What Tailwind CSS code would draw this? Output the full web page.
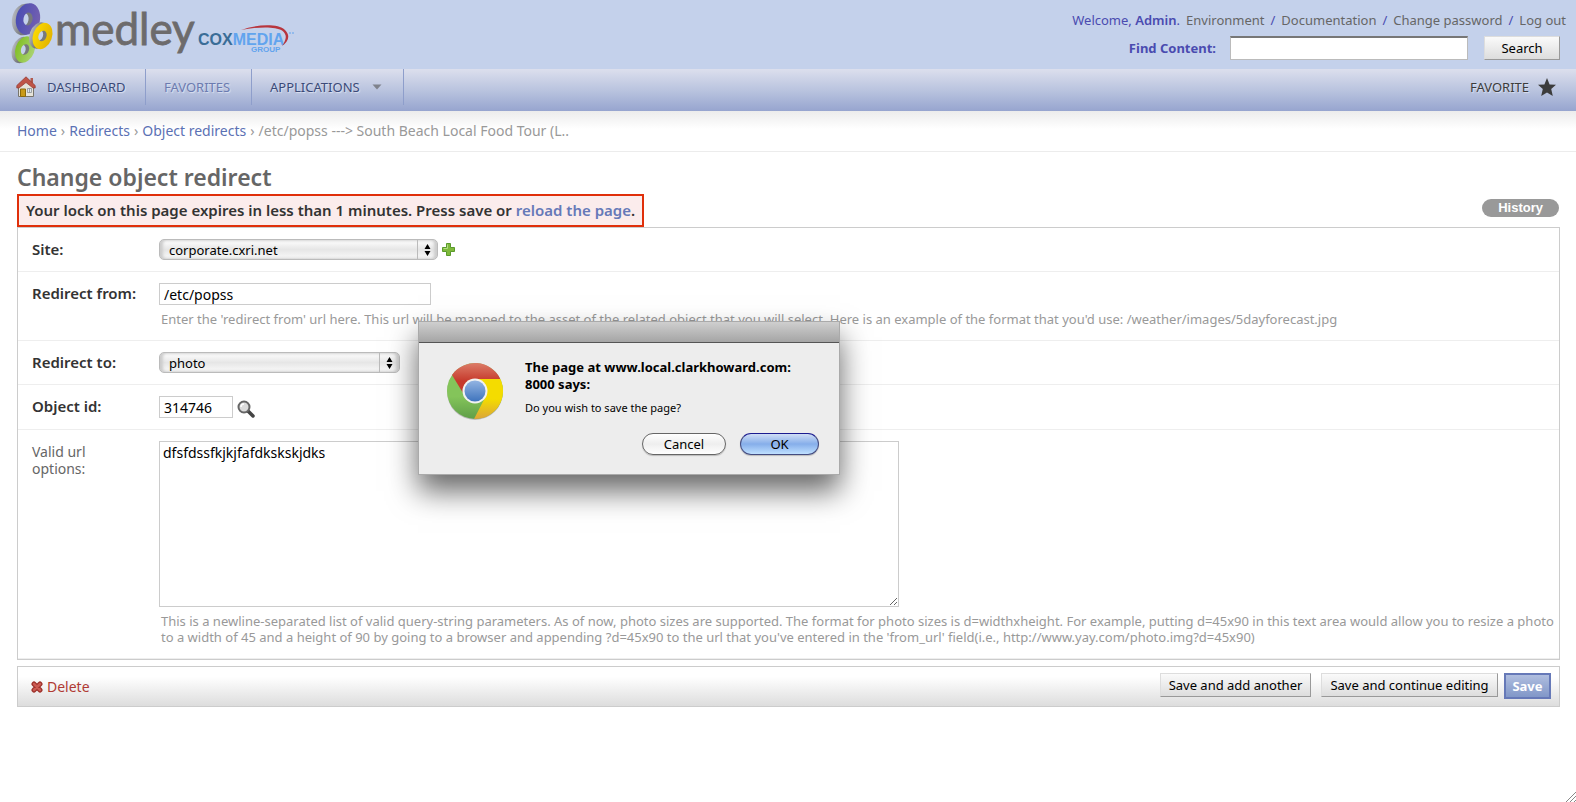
<!DOCTYPE html>
<html lang="en">
<head>
<meta charset="utf-8">
<title>Change object redirect</title>
<script src="https://cdn.jsdelivr.net/npm/@tailwindcss/browser@4"></script>
</head>
<body class="relative min-h-screen bg-white font-['Noto_Sans','Open_Sans',sans-serif] text-[13px] leading-4 text-[#333]">

<header class="flex h-[69px] items-start justify-between bg-[#c4d1eb] pr-[10px]">
  <a href="#" aria-label="Medley, Cox Media Group" class="block">
    <svg width="300" height="69" viewBox="0 0 300 69">
      <defs>
        <linearGradient id="gp" x1="0" x2="1"><stop offset="0" stop-color="#4a4db4"/><stop offset="1" stop-color="#7460b0"/></linearGradient>
        <linearGradient id="gy" x1="0" x2="1"><stop offset="0" stop-color="#fbd900"/><stop offset="1" stop-color="#e3b400"/></linearGradient>
        <linearGradient id="gg" x1="0" x2="1"><stop offset="0" stop-color="#82c025"/><stop offset="1" stop-color="#a9d272"/></linearGradient>
        <linearGradient id="gs" x1="0" x2="1"><stop offset="0" stop-color="#b5b8be"/><stop offset=".5" stop-color="#77797c"/></linearGradient>
        <path id="ringL" fill-rule="evenodd" d="M-12 0A12 16 0 1 1 12 0A12 16 0 1 1 -12 0ZM-4.500 0A4.500 6.500 0 1 0 4.500 0A4.500 6.500 0 1 0 -4.500 0Z"/>
        <path id="ringS" fill-rule="evenodd" d="M-9.500 0A9.500 13.500 0 1 1 9.500 0A9.500 13.500 0 1 1 -9.500 0ZM-4 0A4 5.500 0 1 0 4 0A4 5.500 0 1 0 -4 0Z"/>
      </defs>
      <use href="#ringL" transform="translate(24 19.500) rotate(12)" fill="url(#gs)"/>
      <use href="#ringL" transform="translate(28 19) rotate(12)" fill="url(#gp)"/>
      <use href="#ringS" transform="translate(21.500 50) rotate(20)" fill="url(#gs)"/>
      <use href="#ringS" transform="translate(25 49.500) rotate(20)" fill="url(#gg)"/>
      <use href="#ringS" transform="translate(39 35.500) rotate(20)" fill="url(#gs)"/>
      <use href="#ringS" transform="translate(42.500 36) rotate(20)" fill="url(#gy)"/>
      <text x="55" y="45" font-family="Lato, sans-serif" font-size="44" fill="#6d6b6c" stroke="#6d6b6c" stroke-width=".8">medley</text>
      <text x="198" y="45" font-family="Liberation Sans, sans-serif" font-weight="700" font-size="16" fill="#3a6d97">COX<tspan fill="#61a4ee">MEDIA</tspan></text>
      <text x="251" y="52" font-family="Liberation Sans, sans-serif" font-weight="700" font-size="8" fill="#61a4ee">GROUP</text>
      <path d="M241 30C255 24.500 278 23 285 30C291 36 288 42 282 46C286 40 288 35 282 30.500C275 26 256 27 241 30Z" fill="#b8353d"/>
      <path d="M289 33h2M292 33h2" stroke="#61a4ee" stroke-width="1"/>
    </svg>
  </a>
  <div class="flex flex-col items-end pt-3">
    <nav class="flex gap-[6px] text-[#4a4bb0]">
      <span>Welcome, <b class="font-semibold">Admin</b>.</span>
      <a href="#" class="text-[#666]">Environment</a><span>/</span>
      <a href="#" class="text-[#666]">Documentation</a><span>/</span>
      <a href="#" class="text-[#666]">Change password</a><span>/</span>
      <a href="#" class="text-[#666]">Log out</a>
    </nav>
    <form class="mt-2 flex items-center pr-[6px]">
      <label for="q" class="mr-[14px] font-bold text-[#4a4bb0]">Find Content:</label>
      <input id="q" type="text" class="h-6 w-[238px] border border-[#bbb] border-t-2 border-t-[#777] bg-white px-1 outline-none">
      <button type="button" class="ml-4 h-6 w-[76px] border border-[#ddd] border-r-[#999] border-b-[#999] bg-linear-to-b from-[#fafafa] to-[#ddd] text-black">Search</button>
    </form>
  </div>
</header>

<nav class="flex h-[42px] bg-linear-to-b from-[#dcdfed] via-[#bac4df] to-[#97a5cf] text-[#3a4a78] [text-shadow:1px_1px_1px_#dde2f0]">
  <a href="#" class="flex h-9 w-[146px] items-center border-r border-[#8e9ecb] pl-4">
    <svg width="20" height="22" viewBox="0 0 20 22" class="mr-[11px]">
      <path d="M2.500 10L10 4L17.500 10V20.500H2.500Z" fill="#e6e4da" stroke="#77756c"/>
      <path d="M14.500 2h2.500V7h-2.500Z" fill="#b15a4e"/>
      <path d="M10 .8L0.800 9.500V12H3L10 6.500L17 12H19.200V9.500Z" fill="#bf5447" stroke="#8f3a30" stroke-width=".7"/>
      <path d="M4.500 13h5V20.500h-5Z" fill="#c99a18" stroke="#8b6a0e"/>
      <path d="M11.500 12.500h4v4h-4ZM13.500 12.500v4" fill="#dfe7ee" stroke="#8a9096" stroke-width=".8"/>
    </svg>DASHBOARD</a>
  <a href="#" class="flex h-9 w-[106px] items-center border-r border-[#8e9ecb] pl-[18px] text-[#6b7bb0]">FAVORITES</a>
  <a href="#" class="flex h-9 w-[152px] items-center border-r border-[#8e9ecb] pl-[18px]">APPLICATIONS
    <svg width="10" height="6" viewBox="0 0 10 6" class="ml-3"><path d="M0.500 .5h9L5 5.500Z" fill="#7f828c"/></svg></a>
  <a href="#" class="ml-auto flex h-9 items-center gap-2 pr-[19px] text-[#3c3c3c]">FAVORITE
    <svg width="20" height="20" viewBox="0 0 20 20"><path d="M10 1L12.600 7.400L19 7.800L14.200 12L15.800 19L10 15.600L4.200 19L5.800 12L1 7.800L7.400 7.400Z" fill="#3c3c3c"/></svg></a>
</nav>

<nav class="flex h-[41px] items-center gap-1 border-b border-[#ececec] bg-linear-to-b from-[#ececec] to-white to-45% px-[17px] text-[14px] text-[#999]">
  <a href="#" class="text-[#5b71b4]">Home</a>›<a href="#" class="text-[#5b71b4]">Redirects</a>›<a href="#" class="text-[#5b71b4]">Object redirects</a>›<span>/etc/popss ---&gt; South Beach Local Food Tour (L..</span>
</nav>

<main class="px-[17px] pr-4">
  <h1 class="pt-[10px] pb-[2px] text-[23px] leading-[30px] font-semibold text-[#666]">Change object redirect</h1>
  <div class="flex items-start justify-between">
    <p class="h-[33px] border-2 border-[#e02f0a] bg-[#fbecec] px-[7px] pt-[6px] text-[15px] font-semibold">Your lock on this page expires in less than 1 minutes. Press save or <a href="#" class="text-[#6679b8]">reload the page</a>.</p>
    <a href="#" class="mt-[5px] mr-px h-[18px] rounded-full bg-[#999] px-4 font-['Liberation_Sans',sans-serif] text-[13px] leading-[17px] font-bold text-white">History</a>
  </div>

  <form>
    <fieldset class="border border-[#ccc]">
      <div class="flex border-b border-[#eee] py-[11px] pl-[14px]">
        <label for="site" class="w-[127px] shrink-0 pt-[2px] text-[15px] font-semibold">Site:</label>
        <div class="relative w-[279px]">
          <select id="site" class="block h-[21px] w-full appearance-none rounded-[5px] border border-[#bbb] bg-linear-to-b from-white via-[#e6e6e6] to-[#fafafa] pl-[9px] text-[13px] leading-[18px] text-black shadow-[inset_3px_0_3px_#ccc,inset_-3px_0_3px_#ccc]"><option>corporate.cxri.net</option></select>
          <svg width="22" height="19" viewBox="0 0 22 19" class="pointer-events-none absolute top-px right-0"><path d="M1.500 0v19" stroke="#bbb"/><path d="M11.500 4L14.500 9H8.500ZM11.500 16L14.500 11H8.500Z"/></svg>
        </div>
        <a href="#" aria-label="Add site" class="mt-1 ml-1"><svg width="13" height="13" viewBox="0 0 13 13"><path d="M4.500 .5h4v4h4v4h-4v4h-4v-4h-4v-4h4Z" fill="#7fba3c" stroke="#5a9a2c"/><path d="M5.500 1.500v4h-4" stroke="#b3dc84" fill="none"/></svg></a>
      </div>
      <div class="flex border-b border-[#eee] pt-[11px] pb-[13px] pl-[14px]">
        <label for="from" class="w-[127px] shrink-0 pt-[2px] text-[15px] font-semibold">Redirect from:</label>
        <div>
          <input id="from" type="text" value="/etc/popss" class="block h-[22px] w-[272px] border border-[#ccc] px-1 text-[14px] text-black outline-none">
          <p class="mt-[6px] pl-[2px] text-[13px] text-[#999]">Enter the 'redirect from' url here. This url will be mapped to the asset of the related object that you will select. Here is an example of the format that you'd use: /weather/images/5dayforecast.jpg</p>
        </div>
      </div>
      <div class="flex border-b border-[#eee] py-[11px] pl-[14px]">
        <label for="to" class="w-[127px] shrink-0 pt-[2px] text-[15px] font-semibold">Redirect to:</label>
        <div class="relative w-[241px]">
          <select id="to" class="block h-[21px] w-full appearance-none rounded-[5px] border border-[#bbb] bg-linear-to-b from-white via-[#e6e6e6] to-[#fafafa] pl-[9px] text-[13px] leading-[18px] text-black shadow-[inset_3px_0_3px_#ccc,inset_-3px_0_3px_#ccc]"><option>photo</option></select>
          <svg width="22" height="19" viewBox="0 0 22 19" class="pointer-events-none absolute top-px right-0"><path d="M1.500 0v19" stroke="#bbb"/><path d="M11.500 4L14.500 9H8.500ZM11.500 16L14.500 11H8.500Z"/></svg>
        </div>
      </div>
      <div class="flex border-b border-[#eee] py-[11px] pl-[14px]">
        <label for="oid" class="w-[127px] shrink-0 pt-[2px] text-[15px] font-semibold">Object id:</label>
        <input id="oid" type="text" value="314746" class="h-[22px] w-[74px] border border-[#ccc] px-1 text-[14px] text-black outline-none">
        <a href="#" aria-label="Look up object" class="mt-1 ml-1 h-[18px]"><svg width="18" height="18" viewBox="0 0 18 18"><path d="M11 11L16 16" stroke="#444" stroke-width="3.500" stroke-linecap="round"/><circle cx="7" cy="7" r="5.500" fill="#dcdcdc" stroke="#666" stroke-width="2"/><path d="M4 7a3 3 0 0 1 3-3" stroke="#fff" stroke-width="1.500" fill="none"/></svg></a>
      </div>
      <div class="flex border-b border-[#eee] pt-[11px] pb-[13px] pl-[14px]">
        <label for="opts" class="w-[127px] shrink-0 pt-[2px] pr-10 text-[14px] leading-[17px] text-[#666]">Valid url options:</label>
        <div>
          <textarea id="opts" class="block h-[166px] w-[740px] border border-[#ccc] px-[3px] py-[3px] text-[14px] leading-4 text-black outline-none">dfsfdssfkjkjfafdkskskjdks</textarea>
          <p class="mt-[6px] pl-[2px] text-[13px] text-[#999]">This is a newline-separated list of valid query-string parameters. As of now, photo sizes are supported. The format for photo sizes is d=widthxheight. For example, putting d=45x90 in this text area would allow you to resize a photo<br>to a width of 45 and a height of 90 by going to a browser and appending ?d=45x90 to the url that you've entered in the 'from_url' field(i.e., http://www.yay.com/photo.img?d=45x90)</p>
        </div>
      </div>
    </fieldset>

    <div class="mt-[6px] flex h-[41px] items-start border border-[#ccc] bg-linear-to-b from-white from-25% to-[#ddd] px-2 pt-[6px] text-black">
      <a href="#" class="mt-[6px] ml-[5px] flex items-center gap-1 text-[14px] text-[#b03a34]">
        <svg width="12" height="12" viewBox="0 0 12 12"><path d="M3 3L9 9M9 3L3 9" stroke="#9c302a" stroke-width="5" stroke-linecap="round"/><path d="M3 3L9 9M9 3L3 9" stroke="#cb5a52" stroke-width="2.500" stroke-linecap="round"/></svg>Delete</a>
      <button type="button" class="ml-auto h-6 w-[151px] border border-[#ddd] border-r-[#999] border-b-[#999] bg-linear-to-b from-[#fafafa] to-[#ddd] whitespace-nowrap">Save and add another</button>
      <button type="button" class="ml-[10px] h-6 w-[177px] border border-[#ddd] border-r-[#999] border-b-[#999] bg-linear-to-b from-[#fafafa] to-[#ddd] whitespace-nowrap">Save and continue editing</button>
      <button type="submit" class="ml-[6px] h-[26px] w-[47px] border-2 border-[#6679b8] bg-linear-to-b from-[#b0bedf] to-[#8197c8] font-bold text-white">Save</button>
    </div>
  </form>
</main>

<svg width="10" height="10" viewBox="0 0 10 10" class="fixed right-0 bottom-0"><path d="M0 10L10 0M4 10L10 4M8 10L10 8" stroke="#888"/></svg>

<div role="dialog" aria-labelledby="dlg-title" class="absolute top-[321px] left-[418px] w-[422px] border border-[#aaa] bg-[#ededed] text-black shadow-[0_16px_28px_rgb(0_0_0/0.6)]">
  <div class="h-[21px] border-b border-[#555] bg-linear-to-b from-[#cfcfcf] to-[#a5a5a5]"></div>
  <div class="flex pt-4 pl-[27px]">
    <svg width="58" height="60" viewBox="0 0 58 60" class="mt-[3px] shrink-0">
      <defs>
        <linearGradient id="cr" x1="0" y1="0" x2="0" y2="1"><stop offset="0" stop-color="#dc7c68"/><stop offset=".6" stop-color="#c63a2c"/></linearGradient>
        <linearGradient id="cg" x1="0" y1="0" x2="0" y2="1"><stop offset=".6" stop-color="#84c45a"/><stop offset="1" stop-color="#5f9e48"/></linearGradient>
        <linearGradient id="cy" x1="0" y1="0" x2="0" y2="1"><stop offset=".5" stop-color="#f4dc00"/><stop offset="1" stop-color="#dba53a"/></linearGradient>
        <linearGradient id="cb" x1="0" y1="0" x2="0" y2="1"><stop offset="0" stop-color="#93b4e2"/><stop offset="1" stop-color="#3f74bd"/></linearGradient>
      </defs>
      <circle cx="29" cy="30" r="28" fill="#bbb"/>
      <circle cx="29" cy="29" r="28" fill="url(#cg)"/>
      <path d="M29 17H54.300A28 28 0 0 1 28 57L39.400 35Z" fill="url(#cy)"/>
      <path d="M6 13A28 28 0 0 1 54.300 17H29A12 12 0 0 0 17 31Z" fill="url(#cr)"/>
      <circle cx="29" cy="29" r="12.500" fill="#f2f2f2"/>
      <circle cx="29" cy="29" r="10.500" fill="url(#cb)"/>
    </svg>
    <div class="pl-[21px]">
      <h2 id="dlg-title" class="text-[13px] leading-[17px] font-bold">The page at www.local.clarkhoward.com:<br>8000 says:</h2>
      <p class="mt-[7px] text-[11px] leading-4">Do you wish to save the page?</p>
    </div>
  </div>
  <div class="flex justify-end gap-[14px] pt-[11px] pr-5 pb-[19px]">
    <button type="button" class="h-[22px] w-[84px] rounded-full border border-[#666] bg-linear-to-b from-white via-[#eee] to-white shadow-[0_1px_1px_#bbb]">Cancel</button>
    <button type="button" class="h-[22px] w-[79px] rounded-full border border-[#444c80] border-t-[#1c1c90] bg-linear-to-b from-[#d0def5] via-[#86aeea] to-[#bfe0ff] shadow-[0_1px_1px_#bbb]">OK</button>
  </div>
</div>
</body>
</html>
